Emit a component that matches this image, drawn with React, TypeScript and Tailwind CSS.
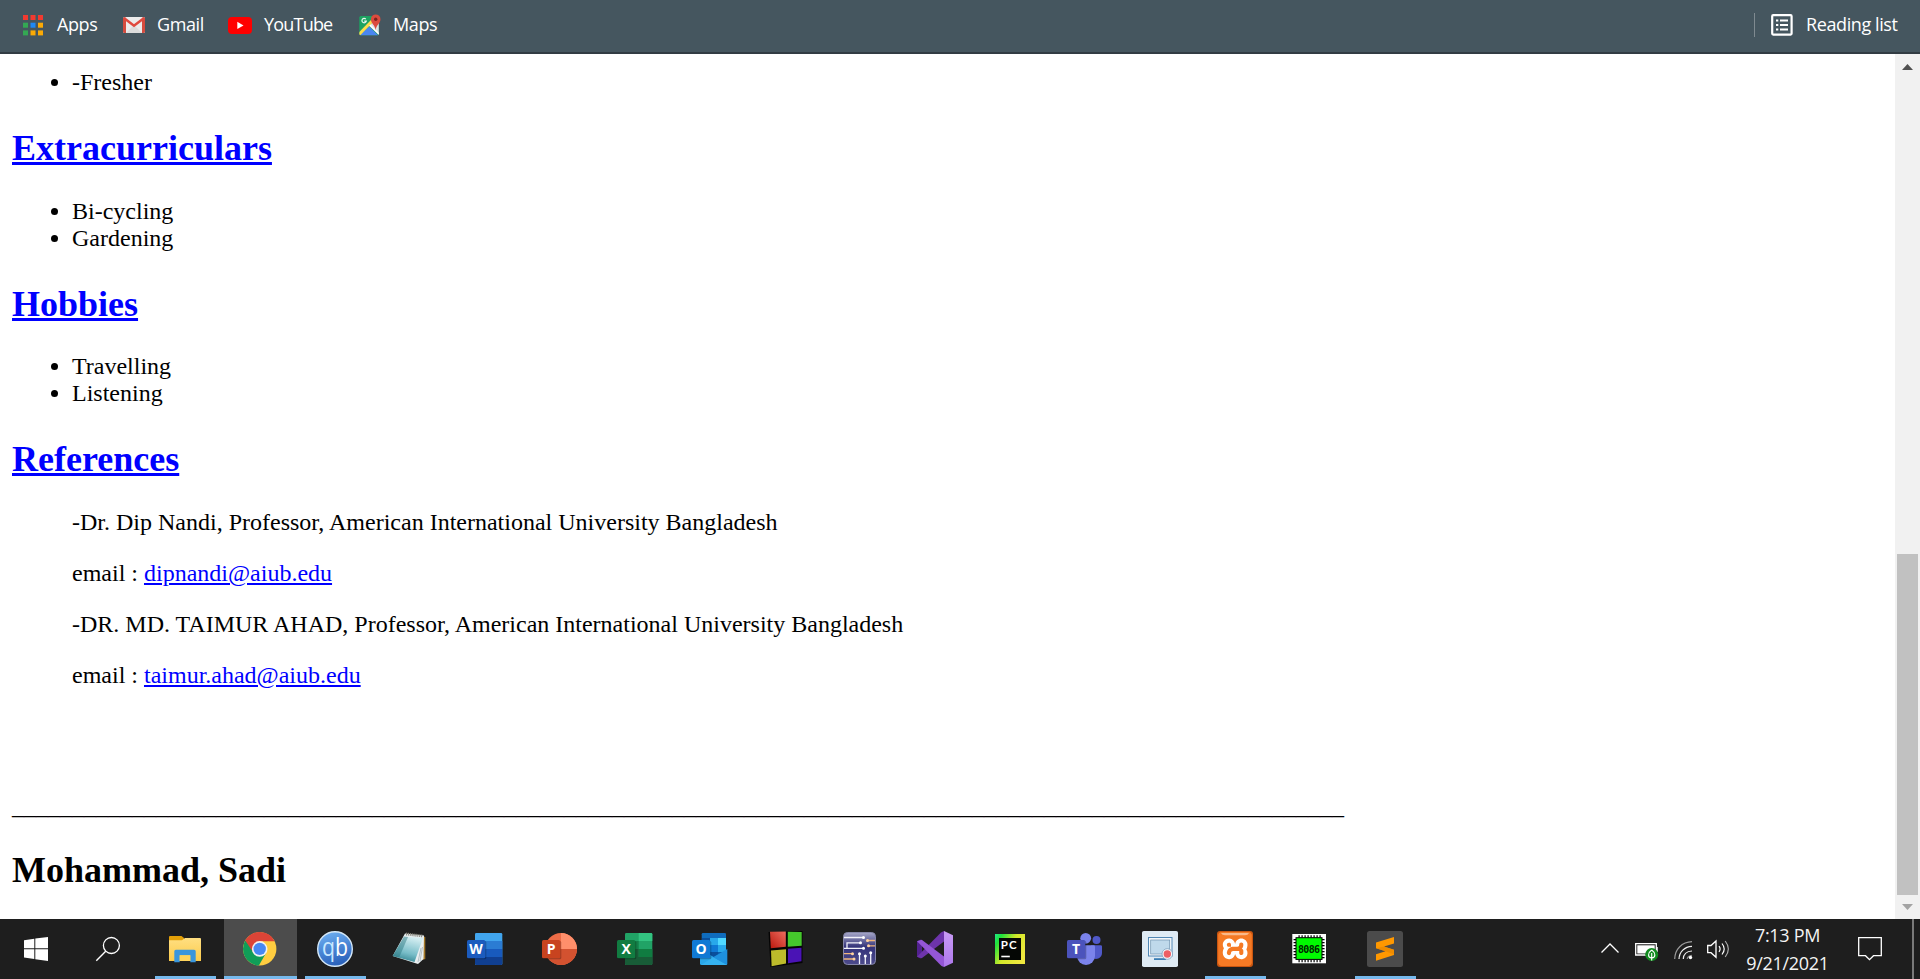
import React from 'react';
import { SiXampp } from 'react-icons/si';

const Svg = ({ w = 36, h = 36, children }: { w?: number; h?: number; children: React.ReactNode }) => (
  <svg width={w} height={h} viewBox={`0 0 ${w} ${h}`} className="block shrink-0 overflow-visible">
    {children}
  </svg>
);

const AppsIcon = () => {
  const colors = ['#f23a30', '#f23a30', '#f23a30', '#34a853', '#1e88f5', '#fbaa05', '#34a853', '#fbaa05', '#fbaa05'];
  return (
    <Svg w={20} h={21}>
      {colors.map((c, i) => (
        <rect key={i} x={(i % 3) * 7.5} y={Math.floor(i / 3) * 7.7} width="5" height="5" fill={c} />
      ))}
    </Svg>
  );
};

const GmailIcon = () => (
  <Svg w={22} h={16}>
    <rect width="22" height="16" rx="1.5" fill="#ececec" />
    <path d="M3 16 L11 8 L19 16Z" fill="#dcdcdc" />
    <path d="M0 1.5 Q0 0 1.5 0 L3 1 V16 H1.5 Q0 16 0 14.5Z M22 1.5 Q22 0 20.5 0 L19 1 V16 H20.5 Q22 16 22 14.5Z" fill="#d54c3f" />
    <path d="M1.2 1.2 L11 8.7 L20.8 1.2" fill="none" stroke="#e04a3f" strokeWidth="2.6" />
  </Svg>
);

const YouTubeIcon = () => (
  <Svg w={24} h={17}>
    <rect width="24" height="17" rx="4" fill="#f00" />
    <path d="M9.3 4.8 L15.5 8.4 L9.3 12Z" fill="#fff" />
  </Svg>
);

const MapsIcon = () => (
  <Svg w={22} h={22}>
    <clipPath id="mapclip"><rect x="0.3" y="2" width="19.5" height="19.3" rx="1.5" /></clipPath>
    <g clipPath="url(#mapclip)">
      <rect y="1" width="21" height="21" fill="#1da261" />
      <path d="M20 4 L20 21 L9.5 11.5Z" fill="#dfe3e6" />
      <path d="M0 22 L10 12.5 L20 22Z" fill="#4a86f0" />
      <path d="M-1 21.5 L15 5" stroke="#fddc4c" strokeWidth="3" />
      <path d="M11 11 L21 21" stroke="#fff" strokeWidth="1.4" />
    </g>
    <path d="M6.8 5.1 A2.2 2.2 0 1 0 7.3 7.1 H5.2" fill="none" stroke="#e9f5ee" strokeWidth="1.2" />
    <path d="M16.6 16.2 C16.2 11 11.9 9.5 11.9 5.2 A4.8 4.8 0 0 1 21.5 5.2 C21.5 9.5 17 11 16.6 16.2Z" fill="#dc4b3e" />
    <circle cx="16.7" cy="5.2" r="1.7" fill="#7b231e" />
  </Svg>
);

const ReadingIcon = () => (
  <Svg w={22} h={22}>
    <rect x="1.2" y="1.2" width="19.4" height="19.4" rx="1" fill="none" stroke="#fff" strokeWidth="2.2" />
    <path d="M5 6.5h2.3M5 11h2.3M5 15.5h2.3M9 6.5h8M9 11h8M9 15.5h8" stroke="#fff" strokeWidth="2.1" />
  </Svg>
);

const Start = () => (
  <Svg w={24} h={24}>
    <path d="M0 3.3 L10.3 1.8 V11.2 H0Z M11.3 1.6 L24 0 V11.2 H11.3Z M0 12.3 H10.3 V22 L0 20.5Z M11.3 12.3 H24 V24 L11.3 22.2Z" fill="#fff" />
  </Svg>
);

const Search = () => (
  <Svg w={24} h={24}>
    <circle cx="15.4" cy="8.5" r="8" fill="none" stroke="#fff" strokeWidth="1.3" />
    <path d="M9.7 14.2 L0.3 23.7" stroke="#fff" strokeWidth="1.4" />
  </Svg>
);

const Explorer = () => (
  <Svg>
    <defs><linearGradient id="fold" x2="0" y2="1"><stop stopColor="#ffdf82" /><stop offset="1" stopColor="#fccb4a" /></linearGradient></defs>
    <path d="M2 6 Q2 5 3 5 H14.5 L17 7 V12 H2Z" fill="#e3a008" />
    <path d="M2 9.3 H15 L18 7 H33 Q34 7 34 8 V30 H2Z" fill="url(#fold)" />
    <path d="M7.3 31.3 V20.2 Q7.3 18.7 8.8 18.7 H27.2 Q28.7 18.7 28.7 20.2 V31.3 H23.3 V24.3 H12.7 V31.3Z" fill="#3a96dd" />
    <path d="M12.7 24.3 H23.3 V30 H12.7Z" fill="#ffd45c" />
  </Svg>
);

const Chrome = () => (
  <Svg>
    <circle cx="17.7" cy="17.9" r="16.7" fill="#ffcd40" />
    <path d="M17.7 17.9 L3.2 9.6 A16.7 16.7 0 0 0 16.9 34.6 L24.2 21.7Z" fill="#109d58" />
    <path d="M17.7 10.3 H32.7 A16.7 16.7 0 0 0 3.2 9.6 L11.2 21.6 L17.7 18Z" fill="#db4437" />
    <circle cx="17.7" cy="17.9" r="7.8" fill="#f1f1f1" />
    <circle cx="17.7" cy="17.9" r="6.2" fill="#4688f4" />
  </Svg>
);

const QB = () => (
  <Svg>
    <defs><linearGradient id="qb" x2="0.3" y2="1"><stop stopColor="#72b4f5" /><stop offset="1" stopColor="#2c64bd" /></linearGradient></defs>
    <circle cx="18" cy="18" r="17.3" fill="url(#qb)" stroke="#d4e7f7" strokeWidth="1.4" />
    <text x="5" y="24.5" fontSize="25" textLength="26" lengthAdjust="spacingAndGlyphs" className="font-['Open_Sans',sans-serif]">
      <tspan fill="#c8e8ff">q</tspan><tspan fill="#fff">b</tspan>
    </text>
  </Svg>
);

const Notepad = () => (
  <Svg>
    <defs><linearGradient id="np" x1="0.5" x2="0.2" y2="1"><stop stopColor="#d3edf1" /><stop offset="0.6" stopColor="#78bdc8" /><stop offset="1" stopColor="#287b88" /></linearGradient></defs>
    <path d="M30 5 L33.3 6 V28 L30 29Z" fill="#a67a29" />
    <path d="M13 2.5 L32 4.5 L31.5 28 L26 33 L0.7 25Z" fill="#e9eff1" />
    <path d="M12 5.5 L31 7 L22.5 31 L0.7 25Z" fill="url(#np)" />
    <path d="M12 5.5 L16 6 L7 26.7 L0.7 25Z" fill="#25707a" opacity=".45" />
    <path d="M29 17 L26 31 M30.5 16 L28 30" stroke="#9eabb0" strokeWidth=".7" />
    <path d="M14 3 L31 5" stroke="#8c8b80" strokeWidth="2.8" strokeDasharray="1.1 .8" />
  </Svg>
);

const Letter = ({ c, fill }: { c: string; fill: string }) => (
  <>
    <rect x="1" y="10" width="18.3" height="18.3" rx="1.5" fill="#000" opacity=".25" />
    <rect y="9" width="18.3" height="18.3" rx="1.5" fill={fill} />
    <text x="9.1" y="23" textAnchor="middle" fontSize="14" fontWeight="700" fill="#fff" className="font-['Open_Sans',sans-serif]">{c}</text>
  </>
);

const Word = () => (
  <Svg>
    <rect x="8" y="2" width="27.3" height="32" rx="1.3" fill="#41a5ee" />
    <path d="M8 10h27.3v8H8z" fill="#2b7cd3" />
    <path d="M8 18h27.3v8H8z" fill="#185abd" />
    <path d="M8 26h27.3v6.7q0 1.3-1.3 1.3H9.3Q8 34 8 32.7z" fill="#103f91" />
    <Letter c="W" fill="#1b5bbe" />
  </Svg>
);

const PowerPoint = () => (
  <Svg>
    <circle cx="19" cy="18" r="16" fill="#ed6c47" />
    <path d="M19 18 V2 A16 16 0 0 1 35 18Z" fill="#ff8f6b" />
    <path d="M3 18 H35 A16 16 0 0 1 3 18Z" fill="#d35230" />
    <Letter c="P" fill="#c8431f" />
  </Svg>
);

const Excel = () => (
  <Svg>
    <rect x="8" y="2" width="27.3" height="32" rx="1.3" fill="#21a366" />
    <path d="M21.7 2h12.3q1.3 0 1.3 1.3V10H21.7z" fill="#33c481" />
    <path d="M8 10h13.7v8H8z" fill="#148048" />
    <path d="M21.7 18h13.6v8H21.7z" fill="#107c41" />
    <path d="M8 18h13.7v8H8zM8 26h27.3v6.7q0 1.3-1.3 1.3H9.3Q8 34 8 32.7z" fill="#185c37" />
    <Letter c="X" fill="#117c41" />
  </Svg>
);

const Outlook = () => (
  <Svg>
    <rect x="9.7" y="2" width="24.3" height="24" rx="1.3" fill="#0f6cbd" />
    <path d="M10 7h8v8h-8z" fill="#0a4f9c" />
    <path d="M18 7h8v7h-8z" fill="#28a8ea" /><path d="M26 7h8v7h-8z" fill="#50d9ff" />
    <path d="M18 14h8v7h-8z" fill="#0f78d4" /><path d="M26 14h8v7h-8z" fill="#28a8ea" />
    <path d="M18 21h8v5h-8z" fill="#0a4f9c" /><path d="M26 21h8v4h-8z" fill="#0b5fad" />
    <path d="M8 18 L35.3 34 H9.5 Q8 34 8 32.5Z" fill="#2aa7ea" />
    <path d="M35.3 18 V32.7 Q35.3 34 34 34 L21 26.3Z" fill="#1e91df" />
    <path d="M21 26.3 L35 34 H9Z" fill="#35b2f0" />
    <Letter c="O" fill="#1079d4" />
  </Svg>
);

const Blocks = () => (
  <Svg>
    <defs>
      <linearGradient id="rd" x1="1" x2="0" y2="1"><stop stopColor="#ef6d5f" /><stop offset="1" stopColor="#b9180e" /></linearGradient>
    </defs>
    <path d="M1.5 1 L35.5 0 V32 L3.5 36Z" fill="#050505" />
    <path d="M3 0.8 L18.8 0.5 V15.8 L3.8 17.2Z" fill="url(#rd)" />
    <path d="M20.8 0.7 L34.7 1 V14.8 L20.8 15.7Z" fill="#45c72c" />
    <path d="M4 19.5 L19 18.2 V32.5 L4.6 35.3Z" fill="#bdbb2b" />
    <path d="M21 17.8 L34.5 16.7 V30.2 L21 32.3Z" fill="#4a13b5" />
  </Svg>
);

const Circuit = () => (
  <Svg>
    <defs><linearGradient id="ci" x2="0" y2="1"><stop stopColor="#a7a8c8" /><stop offset=".45" stopColor="#34337a" /><stop offset="1" stopColor="#4d4b8b" /></linearGradient></defs>
    <rect x="1.5" y="1.5" width="32" height="32" rx="4" fill="url(#ci)" stroke="#8586a8" />
    <g fill="none" stroke="#f2f2fa" strokeWidth="1.3">
      <path d="M2 6.5H21M18 11.8H5V17.3M2 17.3H21M17.5 33V23M23.3 33V25M28.7 33V22" />
      <path d="M33 9.5H26M33 14.8H27M2 22.7H10M2 28H11.500" stroke="#f0b57c" />
    </g>
    <g fill="#fff"><circle cx="21.500" cy="6.500" r="1.500" /><circle cx="18.500" cy="11.800" r="1.500" /><circle cx="21.500" cy="17.300" r="1.500" /><circle cx="17.500" cy="22.700" r="1.500" /><circle cx="23.300" cy="25" r="1.500" /><circle cx="28.700" cy="21.700" r="1.500" /></g>
    <g fill="#ffd3a1"><circle cx="25.500" cy="9.500" r="1.500" /><circle cx="26.500" cy="14.800" r="1.500" /><circle cx="10.500" cy="22.700" r="1.500" /><circle cx="12" cy="28" r="1.500" /></g>
  </Svg>
);

const VisualStudio = () => (
  <Svg>
    <defs><linearGradient id="vs" x2="0" y2="1"><stop stopColor="#c99bf5" /><stop offset="1" stopColor="#ae78ec" /></linearGradient></defs>
    <path d="M0 10.3 L3.500 8.500 L5 9.500 V26.500 L3.500 27.500 L0 25.700Z" fill="#52218f" />
    <path d="M27 0 V10.500 L4.700 27.300 L0 25.700 L24 1.500Z" fill="#6d34ab" />
    <path d="M0 10.300 L4.700 8.700 L27 25.500 V36 L24.500 35Z" fill="#9456d6" />
    <path d="M27 0 L36 4.300 V31.700 L27 36Z" fill="url(#vs)" />
  </Svg>
);

const PyCharm = () => (
  <Svg>
    <defs><linearGradient id="py" x2="1" y2=".6"><stop stopColor="#21e88c" /><stop offset=".18" stopColor="#1fe23b" /><stop offset=".55" stopColor="#d3e829" /><stop offset="1" stopColor="#efe83e" /></linearGradient></defs>
    <rect x="3" y="3" width="30" height="30" fill="url(#py)" />
    <rect x="7" y="7" width="22" height="22" fill="#050705" />
    <text x="8.700" y="18" fontSize="11.500" fontWeight="700" fill="#fff" textLength="16" className="font-['Lato',sans-serif]">PC</text>
    <rect x="9.300" y="24.700" width="8.500" height="1.600" fill="#fff" />
  </Svg>
);

const Teams = () => (
  <Svg>
    <circle cx="29.500" cy="9" r="4" fill="#5059c9" />
    <path d="M24 14.300 H33.700 Q35 14.300 35 15.600 V22 A5.800 5.800 0 0 1 25 26Z" fill="#5059c9" />
    <circle cx="18.700" cy="7.300" r="5.400" fill="#7b83eb" />
    <path d="M10 14.300 H26.700 Q28 14.300 28 15.600 V25 A9 9 0 0 1 10 25Z" fill="#7b83eb" />
    <Letter c="T" fill="#4b53bc" />
  </Svg>
);

const Recorder = () => (
  <Svg>
    <rect width="36" height="36" rx="1.800" fill="#dfebf4" />
    <path d="M12 27.200 H24 V29 H12Z" fill="#3a7db4" />
    <rect x="6.500" y="6.500" width="23.500" height="18.500" fill="#f4f8fb" stroke="#5288b5" />
    <rect x="8.700" y="9" width="19" height="14" fill="#bfd9eb" stroke="#6f93b0" strokeWidth=".7" />
    <circle cx="25.300" cy="23" r="5.300" fill="#f5f7fa" stroke="#7f9fbd" strokeWidth=".8" />
    <circle cx="25.300" cy="23" r="3.700" fill="#ed5e63" />
  </Svg>
);

const Xampp = () => (
  <Svg>
    <rect width="36" height="36" rx="3" fill="#c95510" />
    <rect x="4" y="5.500" width="28" height="26" fill="#fff" />
    <SiXampp x="1" y="1" size={34} color="#f57a25" />
    <path d="M4 2 H32 Q31 4.300 28 4.300 H8 Q5 4.300 4 2Z" fill="#f9b98a" />
  </Svg>
);

const Emu = () => (
  <Svg>
    <rect x="0.300" y="3" width="33.700" height="29.300" fill="#fff" />
    <path d="M6.500 5.500H29M6.500 30H29" stroke="#000" strokeWidth="2.700" strokeDasharray="1.200 1.800" />
    <path d="M2.800 8V28M31.300 8V28" stroke="#000" strokeWidth="2.500" strokeDasharray="1.200 1.800" />
    <rect x="4" y="6.700" width="26" height="21.700" fill="#00fa00" stroke="#000" />
    <text x="6" y="21.500" fontSize="10" fontWeight="700" fill="#002200" textLength="22" className="font-['DejaVu_Sans_Mono',monospace]">8086</text>
  </Svg>
);

const Sublime = () => (
  <Svg>
    <rect width="36" height="36" rx="2.500" fill="#4b4b4b" />
    <path d="M9 11.500 L27 6 V12.500 L17 15.600 L27 18.700 V24 L9 29.700 V23.300 L18.500 20.300 L9 17.300Z" fill="#ff9800" />
    <path d="M9 17.300 L18.500 20.300 L27 23.500 V18.700 L17 15.600Z" fill="#e88700" opacity=".7" />
  </Svg>
);

const tasks: { id: string; Icon: () => React.JSX.Element; open?: boolean; active?: boolean }[] = [
  { id: 'explorer', Icon: Explorer, open: true },
  { id: 'chrome', Icon: Chrome, open: true, active: true },
  { id: 'qb', Icon: QB, open: true },
  { id: 'notepad', Icon: Notepad },
  { id: 'word', Icon: Word },
  { id: 'powerpoint', Icon: PowerPoint },
  { id: 'excel', Icon: Excel },
  { id: 'outlook', Icon: Outlook },
  { id: 'blocks', Icon: Blocks },
  { id: 'circuit', Icon: Circuit },
  { id: 'vs', Icon: VisualStudio },
  { id: 'pycharm', Icon: PyCharm },
  { id: 'teams', Icon: Teams },
  { id: 'recorder', Icon: Recorder },
  { id: 'xampp', Icon: Xampp, open: true },
  { id: 'emu', Icon: Emu },
  { id: 'sublime', Icon: Sublime, open: true },
];

const Bookmarks = () => (
  <header className="flex h-[54px] shrink-0 items-center border-b-2 border-[#323c43] bg-[#45565f] pb-[2px] pl-[23px] pr-[22px] font-['Open_Sans',sans-serif] text-[18px] leading-[26px] tracking-[-0.4px] text-white">
    <a className="flex w-[100px] items-center gap-[14px]"><AppsIcon /><span className="pb-[3px]">Apps</span></a>
    <a className="flex w-[105px] items-center gap-[12px]"><GmailIcon /><span className="pb-[3px]">Gmail</span></a>
    <a className="flex w-[131px] items-center gap-[12px]"><YouTubeIcon /><span className="pb-[3px] tracking-[-0.8px]">YouTube</span></a>
    <a className="flex items-center gap-[12px]"><MapsIcon /><span className="pb-[3px]">Maps</span></a>
    <div className="ml-auto mr-[16px] h-6 w-px bg-[#7f8a90]" />
    <a className="flex w-[127px] items-center gap-[13px] whitespace-nowrap"><ReadingIcon /><span className="pb-[3px]">Reading list</span></a>
  </header>
);

const Heading = ({ children, className }: { children: string; className: string }) => (
  <h2 className={`mt-8 text-[36px] font-bold leading-[41px] ${className}`}>
    <a className="text-[#0000ff] underline">{children}</a>
  </h2>
);

const Items = ({ items }: { items: string[] }) => (
  <ul className="list-disc pl-[60px]">
    {items.map((t) => <li key={t}>{t}</li>)}
  </ul>
);

const Resume = () => (
  <main className="grow pl-3 pt-[15px] font-['Liberation_Serif',serif] text-[24px] leading-[27px] text-black">
    <Items items={['-Fresher']} />
    <Heading className="mb-[29px]">Extracurriculars</Heading>
    <Items items={['Bi-cycling', 'Gardening']} />
    <Heading className="mb-[28px]">Hobbies</Heading>
    <Items items={['Travelling', 'Listening']} />
    <Heading className="mb-[29px]">References</Heading>
    <div className="flex flex-col gap-6 pl-[60px]">
      <p>-Dr. Dip Nandi, Professor, American International University Bangladesh</p>
      <p>email : <a className="text-[#0000ff] underline">dipnandi@aiub.edu</a></p>
      <p>-DR. MD. TAIMUR AHAD, Professor, American International University Bangladesh</p>
      <p>email : <a className="text-[#0000ff] underline">taimur.ahad@aiub.edu</a></p>
    </div>
    <p className="mt-[104px] whitespace-nowrap">{'_'.repeat(111)}</p>
    <h2 className="mt-[30px] text-[36px] font-bold leading-[41px]">Mohammad, Sadi</h2>
  </main>
);

const Scrollbar = () => (
  <aside className="flex w-[25px] shrink-0 flex-col items-center bg-[#f1f1f1]">
    <div className="flex h-[500px] pt-[10px]">
      <Svg w={11} h={6}><path d="M5.500 0 L11 6 H0Z" fill="#505050" /></Svg>
    </div>
    <div className="h-[341px] w-[21px] bg-[#c1c1c1]" />
    <div className="pt-[9px]"><Svg w={11} h={6}><path d="M5.500 6 L11 0 H0Z" fill="#a3a3a3" /></Svg></div>
  </aside>
);

const Taskbar = () => (
  <footer className="flex h-[60px] shrink-0 bg-[#1e1e1e]">
    <div className="w-[72px] pl-6 pt-[18px]"><Start /></div>
    <div className="w-[77px] pl-6 pt-[18px]"><Search /></div>
    <div className="flex gap-[2px]">
      {tasks.map(({ id, Icon, open, active }) => (
        <div key={id} className={active ? 'flex w-[73px] flex-col justify-between bg-[#4c4c4c]' : 'flex w-[73px] flex-col justify-between'}>
          <div className="pl-[18px] pt-3"><Icon /></div>
          {open && <div className={active ? 'h-[3px] w-full bg-[#76b9ed]' : 'ml-[6px] h-[3px] w-[61px] bg-[#76b9ed]'} />}
        </div>
      ))}
    </div>
    <div className="ml-auto flex">
      <div className="w-[34px] pt-6"><Svg w={18} h={10}><path d="M0.500 9.500 L9 1 L17.500 9.500" fill="none" stroke="#fff" strokeWidth="1.300" /></Svg></div>
      <div className="w-[39px] pt-6">
        <Svg w={24} h={18}>
          <path d="M0.700 0.700 H21.300 V12 H0.700Z" fill="none" stroke="#fff" strokeWidth="1.300" />
          <path d="M2.300 2.300 H19.700 V10.500 H2.300Z" fill="#fff" />
          <path d="M22 4 V9" stroke="#fff" strokeWidth="1.500" />
          <circle cx="16.700" cy="11.500" r="6.500" fill="#118b1f" />
          <path d="M16.700 7 C12.500 10 12.500 14.500 16.700 15 C20.900 14.500 20.900 10 16.700 7 M16.700 10 V17.500" fill="none" stroke="#fff" strokeWidth="1.100" />
        </Svg>
      </div>
      <div className="w-[33px] pt-[22px]">
        <Svg w={18} h={18}>
          <g fill="none" stroke="#eee" strokeWidth="1.200">
            <path d="M0.700 18 C1 8 8 1 18 0.700" stroke="#9b9b9b" />
            <path d="M5 18 C5.200 11 10.500 5.600 18 5.300" />
            <path d="M9.300 18 C9.500 13.500 12.500 10.300 18 10" />
            <path d="M13.200 18 C13.400 16 15 14.500 18 14.300" opacity=".5" />
          </g>
          <circle cx="16.500" cy="16.500" r="1.700" fill="#fff" />
        </Svg>
      </div>
      <div className="w-[38px] pt-[21px]">
        <Svg w={22} h={18}>
          <path d="M0.700 5.500 H4 L9 0.900 V17.300 L4 12.700 H0.700Z" fill="none" stroke="#fff" strokeWidth="1.300" />
          <g fill="none" stroke="#fff" strokeWidth="1.200">
            <path d="M12 6.200 Q14.200 9 12 11.800" />
            <path d="M15 3.500 Q19.400 9 15 14.500" />
            <path d="M18.200 1 Q24.500 9 18.200 17" stroke="#aaa" />
          </g>
        </Svg>
      </div>
      <div className="w-[85px] pt-[2px] text-center font-['Open_Sans',sans-serif] text-[18px] leading-[28px] tracking-[-0.3px] whitespace-nowrap text-[#f4f4f4]">
        <div>7:13 PM</div>
        <div>9/21/2021</div>
      </div>
      <div className="w-[82px] pl-[28px] pt-[18px]">
        <Svg w={24} h={24}><path d="M0.700 0.700 H23.300 V18.700 H15.500 L11.500 22.700 L7.500 18.700 H0.700Z" fill="none" stroke="#fff" strokeWidth="1.300" /></Svg>
      </div>
      <div className="mr-[6px] w-[2px] bg-[#7a7a7a]" />
    </div>
  </footer>
);

export default function App() {
  return (
    <div className="flex h-[979px] w-[1920px] flex-col overflow-hidden bg-white">
      <Bookmarks />
      <div className="flex h-[865px] shrink-0">
        <Resume />
        <Scrollbar />
      </div>
      <Taskbar />
    </div>
  );
}
